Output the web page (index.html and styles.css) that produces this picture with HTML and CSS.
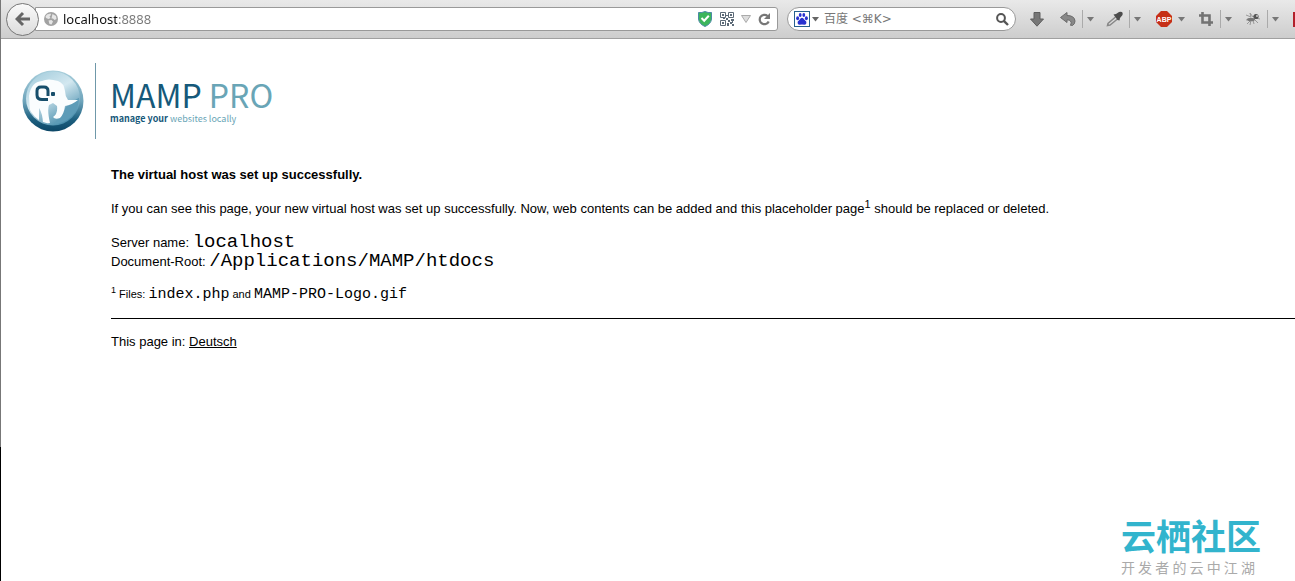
FILE: index.html
```html
<!DOCTYPE html>
<html lang="en">
<head>
    <meta charset="UTF-8">
    <meta name="viewport" content="width=device-width, initial-scale=1.0">
    <title>MAMP PRO</title>
    <link rel="stylesheet" href="styles.css">
</head>
<body>
    <div class="toolbar">
        <button class="back" aria-label="Back">
            <svg width="16" height="16" viewBox="0 0 16 16"><path d="M8 2L2 8L8 14M2.5 8H15" fill="none" stroke="#666" stroke-width="3"/></svg>
        </button>
        <div class="urlbar">
            <svg width="14" height="14" viewBox="0 0 14 14">
                <circle cx="7" cy="7" r="7" fill="#a2a2a2"/>
                <path d="M3 2.5L6.5 1.5L7 3L5.5 4.5L6.5 6L4.5 7L2 6L1.5 4.5zM8.5 2L12 4L12.5 7L10.5 8L9 6.5L7.5 6.5L8 4zM4.5 8.5L7.5 8L9 9.5L7.5 12.5L5.5 12z" fill="#e6e6e6"/>
            </svg>
            <input type="text" class="address" aria-label="Address" value="localhost:8888">
            <svg width="14" height="16" viewBox="0 0 14 16">
                <path d="M0.5 1.5Q4 2 7 0.5Q10 2 13.5 1.5V8Q13 13 7 15.5Q1 13 0.5 8z" fill="#3cb55c" stroke="#4b8aa5"/>
                <path d="M3.5 7L6.2 9.8L10.8 4.8" fill="none" stroke="#fff" stroke-width="2"/>
            </svg>
            <svg class="qr" width="14" height="14" viewBox="0 0 14 14">
                <g fill="none" stroke="#5d6b78"><path d="M0.5 0.5h5v5h-5zM8.5 0.5h5v5h-5zM0.5 8.5h5v5h-5z"/></g>
                <path d="M2 2h2v2H2zM10 2h2v2h-2zM2 10h2v2H2zM6 3h2v1H6zM6 6h2v2H6zM3 6h2v1H3zM8 8h2v2H8zM11 7h3v2h-3zM10 10h2v2h-2zM7 11h2v3H7zM12 12h2v2h-2zM12 9h1v2h-1z" fill="#5d6b78"/>
            </svg>
            <svg class="history" width="10" height="8" viewBox="0 0 10 8"><path d="M0.5 0.5H9.5L5 7.5z" fill="#ddd" stroke="#aaa"/></svg>
            <svg class="reload" width="13" height="13" viewBox="0 0 13 13">
                <path d="M9.6 3A4.7 4.7 0 1 0 10.7 8.5" fill="none" stroke="#777" stroke-width="2.2"/>
                <path d="M12 0V6H6z" fill="#777"/>
            </svg>
        </div>
        <div class="search">
            <svg width="16" height="16" viewBox="0 0 16 16">
                <rect x="0.5" y="0.5" width="15" height="15" fill="#fff" stroke="#27618f"/>
                <g fill="#2932d0"><ellipse cx="3.6" cy="7.2" rx="1.5" ry="2"/><ellipse cx="6.2" cy="4" rx="1.4" ry="2"/><ellipse cx="9.8" cy="4" rx="1.4" ry="2"/><ellipse cx="12.4" cy="7.2" rx="1.5" ry="2"/><path d="M8 6.8Q9.4 6.8 10.2 8.4L12.2 10.6Q13 13.6 10.4 13.8Q8 13.2 5.6 13.8Q3 13.6 3.8 10.6L5.8 8.4Q6.6 6.8 8 6.8z"/></g>
            </svg>
            <svg width="7" height="5" viewBox="0 0 7 5"><path d="M0 0H7L3.5 4.5z" fill="#666"/></svg>
            <input type="text" aria-label="Search" placeholder="百度 &lt;⌘K&gt;">
            <svg width="13" height="13" viewBox="0 0 13 13"><circle cx="5" cy="5" r="3.9" fill="none" stroke="#555" stroke-width="2"/><path d="M7.8 7.8L12 12" stroke="#555" stroke-width="2.4"/></svg>
        </div>
        <div class="tools">
            <button aria-label="Downloads"><svg width="14" height="15" viewBox="0 0 14 15"><path d="M4 0.5H10V7H13.5L7 14.2L0.5 7H4z" fill="#777" stroke="#5e5e5e"/></svg></button>
            <div class="group">
                <button aria-label="Undo close tab"><svg width="16" height="14" viewBox="0 0 16 14"><path d="M0.5 5.5L7 0.5V3.5Q14.5 3.5 15 9Q15 12 12.5 13.5Q12 13.5 10.5 13.3Q12 10.5 10.5 9Q9.5 7.8 7 7.8V10.5z" fill="#888" stroke="#6a6a6a"/></svg></button>
                <button class="caret line" aria-label="Closed tabs"><svg width="7" height="5" viewBox="0 0 7 5"><path d="M0 0H7L3.5 4.5z" fill="#777"/></svg></button>
            </div>
            <div class="group">
                <button aria-label="Color picker"><svg width="18" height="16" viewBox="0 0 18 16"><path d="M9.5 6L2 12.5L1.5 14.5L4 14L11.5 8" fill="#ddd" stroke="#888" stroke-width="1.5"/><path d="M7.5 3.5L10 3L13 1Q17.5 0 16.5 4L14 7L13.5 9.5L11.5 9z" fill="#4c4c4c"/></svg></button>
                <button class="caret line" aria-label="Picker options"><svg width="7" height="5" viewBox="0 0 7 5"><path d="M0 0H7L3.5 4.5z" fill="#777"/></svg></button>
            </div>
            <div class="group abp">
                <button aria-label="Adblock Plus">
                    <svg width="16" height="16" viewBox="0 0 16 16">
                        <path d="M5 0H11L16 5V11L11 16H5L0 11V5z" fill="#c62f16"/>
                        <text x="8" y="11" text-anchor="middle">ABP</text>
                    </svg>
                </button>
                <button class="caret" aria-label="Adblock options"><svg width="7" height="5" viewBox="0 0 7 5"><path d="M0 0H7L3.5 4.5z" fill="#777"/></svg></button>
            </div>
            <div class="group">
                <button aria-label="Screenshot"><svg width="14" height="14" viewBox="0 0 14 14"><path d="M3.5 0V10.5H14M0 3.5H10.5V14" fill="none" stroke="#737373" stroke-width="2.6"/></svg></button>
                <button class="caret line" aria-label="Screenshot options"><svg width="7" height="5" viewBox="0 0 7 5"><path d="M0 0H7L3.5 4.5z" fill="#777"/></svg></button>
            </div>
            <div class="group">
                <button aria-label="Firebug"><svg width="16" height="14" viewBox="0 0 16 14"><path d="M1 3L6 5L5 1L8 5L11 2M1 8L6 7M2 12L6 8L5 13M10 8L13 11M11 6L15 7M8 8L9 12" fill="none" stroke="#999"/><ellipse cx="6" cy="7.5" rx="4" ry="1.8" fill="#777"/><circle cx="11" cy="4.5" r="2.6" fill="#555"/><circle cx="12" cy="4" r="1" fill="#ccc"/></svg></button>
                <button class="caret line" aria-label="Firebug options"><svg width="7" height="5" viewBox="0 0 7 5"><path d="M0 0H7L3.5 4.5z" fill="#777"/></svg></button>
            </div>
            <div class="edge"></div>
        </div>
    </div>

    <div class="header">
        <svg width="62" height="62" viewBox="0 0 62 62">
            <defs>
                <linearGradient id="rim" x1="0" y1="0" x2="0" y2="1"><stop offset="0" stop-color="#a9cfdc"/><stop offset="0.5" stop-color="#6fa5bc"/><stop offset="0.8" stop-color="#1d6080"/><stop offset="1" stop-color="#0d4767"/></linearGradient>
                <linearGradient id="sky" x1="0" y1="0" x2="0.6" y2="1"><stop offset="0" stop-color="#9cc8d9"/><stop offset="0.5" stop-color="#d3e8f0"/><stop offset="1" stop-color="#4c90ae"/></linearGradient>
                <clipPath id="disc"><circle cx="31" cy="28" r="26"/></clipPath>
            </defs>
            <circle cx="31" cy="31" r="30.5" fill="url(#rim)"/>
            <circle cx="31" cy="28.5" r="27" fill="url(#sky)"/>
            <g clip-path="url(#disc)">
                <path d="M38 46L46 34L60 26V58H30z" fill="#5d9cb8"/>
                <path d="M7 26Q9 12 20 11Q26 8 36 11Q42 13 43 21Q43 26 46 30L56 30Q50 35 43 36Q42 44 38 48Q33 50 31 47Q36 44 35 36L31 33L27 35Q25 40 28 53L21 55Q21 44 17 38L17 53L8 42z" fill="#fafdfe"/>
            </g>
            <path d="M26 29.5H20Q15 29.5 15 25V21Q15 17 19 17H22Q26 17 26 21V26" fill="none" stroke="#164e6b" stroke-width="3"/>
            <rect x="29" y="22" width="4" height="4" rx="1" fill="#164e6b"/>
        </svg>
        <div class="brand">
            <div class="name">MAMP <span>PRO</span></div>
            <div class="tagline"><b>manage your</b> websites locally</div>
        </div>
    </div>

    <div class="content">
        <h1>The virtual host was set up successfully.</h1>
        <p>If you can see this page, your new virtual host was set up successfully. Now, web contents can be added and this placeholder page<sup>1</sup> should be replaced or deleted.</p>
        <p class="server">Server name: <code>localhost</code><br>Document-Root: <code>/Applications/MAMP/htdocs</code></p>
        <p class="files"><sup>1</sup> Files: <code>index.php</code> and <code>MAMP-PRO-Logo.gif</code></p>
        <hr>
        <p>This page in: <a href="#">Deutsch</a></p>
    </div>

    <div class="watermark" lang="zh">
        <div class="community">云栖社区</div>
        <div class="slogan">开 发 者 的 云 中 江 湖</div>
    </div>
</body>
</html>
```
FILE: styles.css
```css
* {
    box-sizing: border-box;
}
body {
    margin: 0;
    min-height: 100vh;
    position: relative;
    font-family: "Liberation Sans", Arial, sans-serif;
    font-size: 13px;
    color: #000;
    background: linear-gradient(#777 77%, #000 77%) left / 1px 100% no-repeat #fff;
}
button {
    display: flex;
    align-items: center;
    justify-content: center;
    padding: 0;
    border: none;
    background: none;
    cursor: pointer;
}
input {
    min-width: 0;
    flex: 1;
    padding: 0;
    border: none;
    outline: none;
    background: none;
    font-size: 12px;
}
svg {
    flex: none;
}

/* browser toolbar */
.toolbar {
    display: flex;
    align-items: center;
    height: 39px;
    margin-left: 1px;
    padding-left: 5px;
    background: linear-gradient(#e9e9e9, #cdcdcd);
    border-bottom: 1px solid #a0a0a0;
}
.back {
    width: 33px;
    height: 33px;
    flex: none;
    z-index: 1;
    border: 1px solid #777;
    border-radius: 50%;
    background: linear-gradient(#fafafa, #dcdcdc);
}
.urlbar {
    display: flex;
    align-items: center;
    flex: 1;
    height: 24px;
    margin-left: -4px;
    padding: 0 6px 0 8px;
    border: 1px solid #999;
    border-radius: 0 3px 3px 0;
    background: #fff;
}
.address {
    margin-left: 5px;
    font-family: "Noto Sans", sans-serif;
    font-size: 13px;
    color: transparent;
    background: linear-gradient(to right, #111 54px, #777 54px);
    -webkit-background-clip: text;
    background-clip: text;
}
.qr {
    margin-left: 8px;
}
.history {
    margin: 0 7px;
}
.search {
    display: flex;
    align-items: center;
    width: 229px;
    height: 24px;
    margin-left: 9px;
    padding: 0 6px;
    border: 1px solid #999;
    border-radius: 12px;
    background: #fff;
}
.search input {
    margin: 0 5px;
    font-family: "DejaVu Sans", "Noto Sans CJK SC", sans-serif;
}
.search svg + svg {
    margin-left: 2px;
}
.search input::placeholder {
    color: #777;
}
.tools {
    display: flex;
    align-items: center;
    gap: 3px;
    margin-left: 7px;
}
.tools button {
    width: 28px;
    height: 18px;
}
.group {
    display: flex;
}
.tools .line {
    width: 16px;
    border-left: 1px solid #aaa;
}
.tools .abp button {
    width: 32px;
}
.tools .abp .caret {
    width: 9px;
    justify-content: flex-end;
    padding-right: 4px;
}
.abp text {
    font: bold 7px "Liberation Sans", sans-serif;
    fill: #fff;
}
.edge {
    width: 2px;
    height: 15px;
    margin-left: 7px;
    background: #b3202a;
}

/* logo */
.header {
    display: flex;
    align-items: center;
    padding: 24px 0 0 22px;
}
.brand {
    height: 76px;
    margin-left: 11px;
    padding: 13px 0 0 14px;
    border-left: 1px solid #6f98a9;
    font-family: "Noto Sans CJK SC", sans-serif;
    color: #16597a;
}
.name {
    font-size: 32px;
    line-height: 36px;
}
.name span {
    color: #69a5b6;
}
.tagline {
    font-size: 9px;
    line-height: 14px;
    color: #69a5b6;
}
.tagline b {
    color: #16597a;
}

/* page text */
.content {
    padding-left: 111px;
    line-height: 16px;
}
h1 {
    margin: 28px 0 18px;
    font-size: 13px;
}
p {
    margin: 0 0 15px;
}
sup {
    line-height: 0;
    font-size: 11px;
}
code {
    font-family: "Liberation Mono", "Courier New", monospace;
}
.server {
    margin-top: 16px;
    line-height: 19px;
}
.server code {
    font-size: 19px;
}
.files {
    font-size: 11px;
}
.files sup {
    font-size: 9px;
}
.files code {
    font-size: 15px;
}
hr {
    margin: 15px 0;
    border: none;
    border-top: 1px solid #000;
}
a {
    color: #000;
}

.watermark {
    position: absolute;
    right: 34px;
    bottom: 5px;
    font-family: "Noto Sans CJK SC", sans-serif;
}
.community {
    font-size: 35px;
    line-height: 46px;
    font-weight: bold;
    color: #32b4cd;
}
.slogan {
    font-size: 14px;
    line-height: 18px;
    color: #aaa;
}
```
